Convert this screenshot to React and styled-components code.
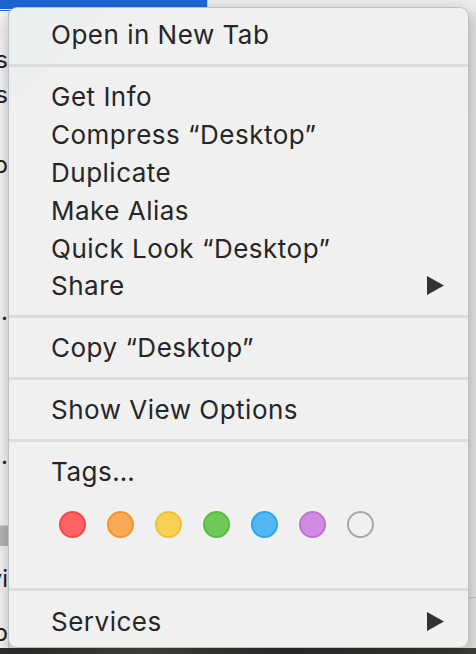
import React from "react";
import styled, { createGlobalStyle } from "styled-components";

const Global = createGlobalStyle`
  html, body { margin: 0; padding: 0; }
  body { width: 476px; height: 654px; overflow: hidden; background: #e8e8e8; }
  * { box-sizing: border-box; }
`;

const Stage = styled.div`
  position: relative;
  width: 476px;
  height: 654px;
  display: flex;
  flex-direction: column;
  font-family: Inter, "Liberation Sans", sans-serif;
  overflow: hidden;
`;

const TopBar = styled.div`
  height: 13px;
  display: flex;
  background: #ececec;
`;

const Selection = styled.div`
  width: 208px;
  background: linear-gradient(#1d67d4 0, #1d67d4 9px, #f4f4f4 9px, #f4f4f4 10px, #2a6fd0 10px, #2a6fd0 11px, #f4f4f4 11px);
  border-right: 1px solid #c9c9c9;
`;

const Middle = styled.div`
  flex: 1;
  display: flex;
`;

const LeftStrip = styled.div`
  width: 9px;
  background: #f6f6f6;
  border-right: 1px solid #cfcfcf;
  overflow: hidden;
  display: flex;
  flex-direction: column;
  padding-top: 33px;
`;

const Fragment = styled.div`
  width: 60px;
  margin-left: -52px;
  text-align: right;
  font-size: 24px;
  line-height: 30px;
  color: #222;
  margin-top: ${(p) => p.$gap || 0}px;
  white-space: nowrap;
`;

const GrayBlock = styled.div`
  height: 21px;
  margin-top: ${(p) => p.$gap || 0}px;
  background: #b8b8b8;
  border-top: 1px solid #d8d8d8;
`;

const Filler = styled.div`
  flex: 1;
`;

const RightStrip = styled.div`
  width: 8px;
  display: flex;
  flex-direction: column;
  background: #e4e4e4;
`;

const RightLine = styled.div`
  height: 1px;
  margin-top: 585px;
  background: #c4c4c4;
`;

const Desk = styled.div`
  height: 6px;
  background: linear-gradient(90deg, #2c2f2c, #4a4a44 30%, #2f322f 60%, #3e3d38);
`;

const Menu = styled.div`
  position: absolute;
  top: 7px;
  left: 8px;
  width: 461px;
  height: 641px;
  padding: 8px 0 7px;
  background: linear-gradient(135deg, #e8efef 0, #f0f0f0 90px, #f0f0f0 100%);
  border: 1px solid rgba(0, 0, 0, 0.2);
  border-radius: 9px;
  box-shadow: 0 6px 18px rgba(0, 0, 0, 0.28);
  display: flex;
  flex-direction: column;
`;

const Item = styled.div`
  height: 38px;
  padding: 0 24px 0 42px;
  display: flex;
  align-items: center;
  justify-content: space-between;
  font-size: 26px;
  letter-spacing: 0.5px;
  color: #262626;
  white-space: nowrap;
`;

const Separator = styled.div`
  height: 3px;
  margin: 10px 0 11px;
  background: #dcdcdc;
`;

const Dots = styled.div`
  height: 88px;
  padding: 21px 0 0 50px;
  display: flex;
  gap: 21px;
`;

const Dot = styled.div`
  width: 27px;
  height: 27px;
  border-radius: 50%;
  background: ${(p) => p.$fill};
  border: 2px solid ${(p) => p.$ring};
`;

const Arrow = () => (
  <svg width="17" height="19" viewBox="0 0 17 19">
    <polygon points="0,0 17,9.5 0,19" fill="#333" />
  </svg>
);

const dots = [
  ["#fe6363", "#fb4547"],
  ["#f9a855", "#f5932b"],
  ["#f5cf56", "#f2bf33"],
  ["#6ecb59", "#55bf3c"],
  ["#52b7f3", "#2ba6ef"],
  ["#cf8be0", "#c26fd8"],
  ["transparent", "#a6a6a6"],
];

export default function App() {
  return (
    <>
      <Global />
      <Stage>
        <TopBar>
          <Selection />
        </TopBar>
        <Middle>
          <LeftStrip>
            <Fragment>Aps</Fragment>
            <Fragment $gap={5}>Ds</Fragment>
            <Fragment $gap={40}>Dp</Fragment>
            <Fragment $gap={117}>ab..</Fragment>
            <Fragment $gap={114}>ab..</Fragment>
            <GrayBlock $gap={54} />
            <Fragment $gap={18}>Pvi</Fragment>
            <Fragment $gap={24}>Pb</Fragment>
          </LeftStrip>
          <Filler />
          <RightStrip>
            <RightLine />
          </RightStrip>
        </Middle>
        <Desk />
        <Menu>
          <Item>Open in New Tab</Item>
          <Separator />
          <Item>Get Info</Item>
          <Item>Compress “Desktop”</Item>
          <Item>Duplicate</Item>
          <Item>Make Alias</Item>
          <Item>Quick Look “Desktop”</Item>
          <Item>
            Share
            <Arrow />
          </Item>
          <Separator />
          <Item>Copy “Desktop”</Item>
          <Separator />
          <Item>Show View Options</Item>
          <Separator />
          <Item>Tags…</Item>
          <Dots>
            {dots.map(([f, r], i) => (
              <Dot key={i} $fill={f} $ring={r} />
            ))}
          </Dots>
          <Separator />
          <Item>
            Services
            <Arrow />
          </Item>
        </Menu>
      </Stage>
    </>
  );
}
